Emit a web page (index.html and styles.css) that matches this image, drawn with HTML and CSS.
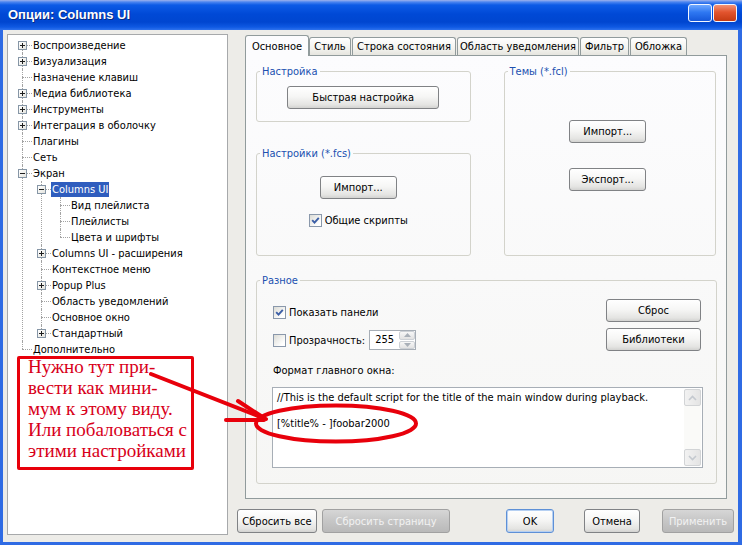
FILE: index.html
```html
<!DOCTYPE html>
<html lang="ru">
<head>
<meta charset="utf-8">
<title>Опции: Columns UI</title>
<link rel="stylesheet" href="styles.css">
</head>
<body>
<div class="window">
  <div class="titlebar">
    <span class="title">Опции: Columns UI</span>
    <div class="caption-buttons">
      <span class="cap-btn help"></span>
      <span class="cap-btn close"></span>
    </div>
  </div>
  <div class="client">
    <div class="tree">
      <ul class="tree-list">
        <li><span class="exp plus"></span><div class="row"><span class="label">Воспроизведение</span></div></li>
        <li><span class="exp plus"></span><div class="row"><span class="label">Визуализация</span></div></li>
        <li><div class="row"><span class="label">Назначение клавиш</span></div></li>
        <li><span class="exp plus"></span><div class="row"><span class="label">Медиа библиотека</span></div></li>
        <li><span class="exp plus"></span><div class="row"><span class="label">Инструменты</span></div></li>
        <li><span class="exp plus"></span><div class="row"><span class="label">Интеграция в оболочку</span></div></li>
        <li><div class="row"><span class="label">Плагины</span></div></li>
        <li><div class="row"><span class="label">Сеть</span></div></li>
        <li><span class="exp minus"></span><div class="row"><span class="label">Экран</span></div>
          <ul>
            <li><span class="exp minus"></span><div class="row"><span class="label selected">Columns UI</span></div>
              <ul>
                <li><div class="row"><span class="label">Вид плейлиста</span></div></li>
                <li><div class="row"><span class="label">Плейлисты</span></div></li>
                <li><div class="row"><span class="label">Цвета и шрифты</span></div></li>
              </ul>
            </li>
            <li><span class="exp plus"></span><div class="row"><span class="label">Columns UI - расширения</span></div></li>
            <li><div class="row"><span class="label">Контекстное меню</span></div></li>
            <li><span class="exp plus"></span><div class="row"><span class="label">Popup Plus</span></div></li>
            <li><div class="row"><span class="label">Область уведомлений</span></div></li>
            <li><div class="row"><span class="label">Основное окно</span></div></li>
            <li><span class="exp plus"></span><div class="row"><span class="label">Стандартный</span></div></li>
          </ul>
        </li>
        <li><div class="row"><span class="label">Дополнительно</span></div></li>
      </ul>
    </div>

    <div class="main">
      <div class="tabs">
        <span class="tab active t-main">Основное</span>
        <span class="tab t-style">Стиль</span>
        <span class="tab t-status">Строка состояния</span>
        <span class="tab t-tray">Область уведомления</span>
        <span class="tab t-filter">Фильтр</span>
        <span class="tab t-cover">Обложка</span>
      </div>
      <div class="page">
        <div class="top">
          <div class="col-left">
            <fieldset class="group g-setup">
              <legend>Настройка</legend>
              <div class="gbody">
                <button class="btn b-quick">Быстрая настройка</button>
              </div>
            </fieldset>
            <fieldset class="group g-fcs">
              <legend>Настройки (*.fcs)</legend>
              <div class="gbody">
                <button class="btn b-small">Импорт...</button>
                <div class="check-row shared">
                  <span class="cb"><svg viewBox="0 0 11 11" width="11" height="11"><path d="M2.2 5.2 L4.5 7.6 L8.8 2.8" fill="none" stroke="#3B5EA6" stroke-width="1.9"/></svg></span>
                  <span class="cb-label">Общие скрипты</span>
                </div>
              </div>
            </fieldset>
          </div>
          <fieldset class="group g-themes">
            <legend>Темы (*.fcl)</legend>
            <div class="gbody">
              <button class="btn b-small">Импорт...</button>
              <button class="btn b-small b-export">Экспорт...</button>
            </div>
          </fieldset>
        </div>

        <fieldset class="group g-misc">
          <legend>Разное</legend>
          <div class="misc-row">
            <div class="misc-left">
              <div class="check-row">
                <span class="cb"><svg viewBox="0 0 11 11" width="11" height="11"><path d="M2.2 5.2 L4.5 7.6 L8.8 2.8" fill="none" stroke="#3B5EA6" stroke-width="1.9"/></svg></span>
                <span class="cb-label">Показать панели</span>
              </div>
              <div class="check-row row-alpha">
                <span class="cb"></span>
                <span class="cb-label">Прозрачность:</span>
                <div class="spin">
                  <span class="spin-val">255</span>
                  <div class="spin-btns">
                    <span class="spin-btn"><svg viewBox="0 0 7 4" width="7" height="4"><path d="M0 4 L3.5 0 L7 4 Z" fill="#A9B0B8"/></svg></span>
                    <span class="spin-btn"><svg viewBox="0 0 7 4" width="7" height="4"><path d="M0 0 L3.5 4 L7 0 Z" fill="#A9B0B8"/></svg></span>
                  </div>
                </div>
              </div>
            </div>
            <div class="misc-right">
              <button class="btn b-wide">Сброс</button>
              <button class="btn b-wide b-libs">Библиотеки</button>
            </div>
          </div>
          <div class="fmt-label">Формат главного окна:</div>
          <div class="editor">
            <div class="editor-text">//This is the default script for the title of the main window during playback.

[%title% - ]foobar2000</div>
            <div class="vscroll">
              <span class="sb-btn"><svg viewBox="0 0 9 6" width="9" height="6"><path d="M1 5 L4.5 1.5 L8 5" fill="none" stroke="#C4C9CF" stroke-width="1.6"/></svg></span>
              <span class="sb-btn"><svg viewBox="0 0 9 6" width="9" height="6"><path d="M1 1 L4.5 4.5 L8 1" fill="none" stroke="#C4C9CF" stroke-width="1.6"/></svg></span>
            </div>
          </div>
        </fieldset>
      </div>

      <div class="actions">
        <button class="btn b-reset-all">Сбросить все</button>
        <button class="btn disabled b-reset-page">Сбросить страницу</button>
        <button class="btn b-ok">OK</button>
        <button class="btn b-cancel">Отмена</button>
        <button class="btn disabled b-apply">Применить</button>
      </div>
    </div>
  </div>
</div>

<div class="note">
  <div class="note-text">Нужно тут при-<br>вести как мини-<br>мум к этому виду.<br>Или побаловаться с<br>этими настройками</div>
</div>
<svg class="marks" width="742" height="545" viewBox="0 0 742 545">
  <g fill="none" stroke="#E8000B" stroke-width="4" stroke-linecap="round">
    <path d="M151 374 L266 419"/>
    <path d="M238 401 L264 418"/>
    <path d="M226 420 L264 420"/>
    <ellipse cx="336" cy="423.5" rx="80" ry="18"/>
  </g>
</svg>
</body>
</html>
```

FILE: styles.css
```css
* { box-sizing: border-box; }

html, body {
  margin: 0;
  padding: 0;
}

body {
  position: relative;
  width: 742px;
  height: 545px;
  overflow: hidden;
  background: #2F6BE4;
  font-family: "DejaVu Sans Condensed", "Liberation Sans", sans-serif;
  font-size: 11px;
  color: #000;
}

.window {
  display: flex;
  flex-direction: column;
  height: 545px;
}

/* ---------- title bar ---------- */
.titlebar {
  flex: none;
  height: 30px;
  display: flex;
  justify-content: space-between;
  align-items: flex-start;
  padding: 0 5px 0 8px;
  background: linear-gradient(#9FB3EC 0, #4C86F0 2px, #0D5BE6 5px, #0049D6 14px, #0046D0 22px, #0E58E2 27px, #2E72EE 30px);
}

.title {
  margin-top: 7px;
  color: #fff;
  font: bold 13px/16px "Liberation Sans", sans-serif;
  text-shadow: 1px 1px 0 #0A2A80;
}

.caption-buttons {
  display: flex;
  gap: 1px;
  margin-top: 4px;
}

.cap-btn {
  width: 24px;
  height: 18px;
  border: 1px solid #F2F6FF;
  border-radius: 3px;
}

.help { background: linear-gradient(#6FA8FF, #2F78F2 45%, #1557DA); }
.close { background: linear-gradient(#F39376, #E2542E 45%, #C53A12); }

/* ---------- client ---------- */
.client {
  flex: 1;
  margin: 0 4px 3px 3px;
  background: #EDECE8;
  display: flex;
  align-items: flex-start;
}

/* ---------- tree ---------- */
.tree {
  width: 221px;
  height: 501px;
  margin: 4px 0 0 4px;
  padding-top: 2px;
  background: #fff;
  border: 1px solid #A7A9AB;
}

.tree-list, .tree-list ul {
  list-style: none;
  margin: 0;
  padding: 0;
}

.tree-list ul { margin-left: -5px; }

.tree-list li {
  position: relative;
  padding-left: 24px;
}

.tree-list li::before {
  content: "";
  position: absolute;
  left: 14px;
  top: 0;
  bottom: 0;
  border-left: 1px dotted #A3A3A3;
}

.tree-list li:last-child::before { bottom: auto; height: 8px; }
.tree-list > li:first-child::before { top: 8px; }

.tree-list li::after {
  content: "";
  position: absolute;
  left: 14px;
  top: 8px;
  width: 10px;
  border-top: 1px dotted #A3A3A3;
}

.row {
  height: 16px;
  padding-top: 1px;
  line-height: 15px;
  white-space: nowrap;
}

.label {
  display: inline-block;
  padding: 0 1px;
  line-height: 15px;
}

.label.selected {
  background: #2F5DBE;
  color: #fff;
}

.exp {
  position: absolute;
  z-index: 1;
  left: 10px;
  top: 4px;
  width: 9px;
  height: 9px;
  border: 1px solid #8696A6;
  background: linear-gradient(135deg, #FFFFFF, #E4E4DE);
}

.exp.plus {
  background:
    linear-gradient(#1E1E1E, #1E1E1E) center / 5px 1px no-repeat,
    linear-gradient(#1E1E1E, #1E1E1E) center / 1px 5px no-repeat,
    linear-gradient(135deg, #FFFFFF, #E4E4DE);
}

.exp.minus {
  background:
    linear-gradient(#1E1E1E, #1E1E1E) center / 5px 1px no-repeat,
    linear-gradient(135deg, #FFFFFF, #E4E4DE);
}

/* ---------- main area ---------- */
.main {
  margin: 5px 0 0 9px;
  display: flex;
  flex-direction: column;
}

.tabs {
  position: relative;
  z-index: 2;
  display: flex;
  align-items: flex-end;
  gap: 1px;
  height: 21px;
  margin: 0 0 -1px 8px;
}

.tab {
  height: 18px;
  margin-bottom: 1px;
  padding-top: 2px;
  line-height: 14px;
  text-align: center;
  border: 1px solid #919B9C;
  border-bottom: none;
  border-radius: 3px 3px 0 0;
  background: linear-gradient(#FFFFFF, #F3F3EF 60%, #E6E5DF);
  white-space: nowrap;
}

.tab.active {
  height: 21px;
  margin-bottom: 0;
  margin-right: -1px;
  padding-top: 4px;
  background: #FCFCFE;
}

.t-main { width: 64px; }
.t-style { width: 42px; }
.t-status { width: 104px; }
.t-tray { width: 122px; }
.t-filter { width: 49px; }
.t-cover { width: 57px; }

.page {
  width: 482px;
  height: 444px;
  margin-left: 8px;
  padding: 9px 10px 0;
  border: 1px solid #919B9C;
  background: linear-gradient(#FCFCFE, #F6F6F4);
}

.top {
  display: flex;
  gap: 33px;
}

.col-left {
  width: 215px;
  display: flex;
  flex-direction: column;
}

/* group boxes */
.group {
  margin: 0;
  padding: 0;
  min-width: 0;
  border: 1px solid #D3D3CB;
  border-radius: 3px;
}

.group legend {
  margin-left: 3px;
  padding: 0 2px;
  line-height: 13px;
  color: #2050B0;
}

.gbody {
  display: flex;
  flex-direction: column;
  align-items: center;
}

.g-setup { height: 57px; }
.g-setup .gbody { padding-top: 8px; }

.g-fcs { height: 109px; margin-top: 25px; }
.g-fcs .gbody { padding: 16px 10px 0 0; }

.g-themes { width: 213px; height: 191px; }
.g-themes .gbody { padding: 42px 4px 0 0; }

.g-misc { width: 461px; height: 210px; margin-top: 18px; }

/* buttons */
.btn {
  font: inherit;
  color: #000;
  height: 23px;
  padding: 0;
  border: 1px solid #808285;
  border-radius: 3px;
  background: linear-gradient(#FFFFFF, #F6F6F5 45%, #E4E4E2 85%, #D2D2D0);
  white-space: nowrap;
}

.btn.disabled {
  color: #F2F2F2;
  border-color: #A1A1A1;
  background: linear-gradient(#D6D6D6, #C6C6C6 50%, #B9B9B9);
}

.b-quick { width: 152px; }
.b-small { width: 77px; }
.b-export { margin-top: 25px; }
.b-wide { width: 95px; }
.b-libs { margin-top: 6px; }

/* checkboxes */
.check-row {
  display: flex;
  align-items: center;
  height: 16px;
  white-space: nowrap;
}

.shared { margin-top: 13px; }

.cb {
  flex: none;
  width: 13px;
  height: 13px;
  margin-right: 3px;
  border: 1px solid #8A98AB;
  background: linear-gradient(135deg, #DCDCD6, #FFFFFF 80%);
  display: flex;
  align-items: center;
  justify-content: center;
}

/* misc group */
.misc-row {
  display: flex;
  justify-content: space-between;
  align-items: flex-start;
  padding: 0 15px 0 16px;
}

.misc-left { margin-top: 17px; }
.row-alpha { height: 20px; margin-top: 10px; }

.spin {
  display: flex;
  width: 47px;
  height: 20px;
  margin-left: 4px;
  border: 1px solid #A7AEB6;
  background: #fff;
}

.spin-val {
  flex: 1;
  padding-left: 5px;
  line-height: 18px;
}

.spin-btns {
  width: 16px;
  display: flex;
  flex-direction: column;
  gap: 1px;
}

.spin-btn {
  flex: 1;
  display: flex;
  align-items: center;
  justify-content: center;
  border: 1px solid #CDD1D6;
  border-radius: 2px;
  background: linear-gradient(#F7F7F7, #E2E2E2);
}

.misc-right {
  display: flex;
  flex-direction: column;
  margin-top: 12px;
}

.fmt-label {
  margin: 13px 0 0 16px;
  line-height: 13px;
}

.editor {
  display: flex;
  width: 431px;
  height: 81px;
  margin: 10px 0 0 15px;
  border: 1px solid #A7AEB6;
  background: #fff;
}

.editor-text {
  flex: 1;
  padding: 3px 0 0 4px;
  line-height: 13px;
  white-space: pre;
  overflow: hidden;
}

.vscroll {
  width: 17px;
  margin: 1px 1px 1px 0;
  display: flex;
  flex-direction: column;
  justify-content: space-between;
  background: #FAFAF8;
}

.sb-btn {
  height: 17px;
  display: flex;
  align-items: center;
  justify-content: center;
  border: 1px solid #D2D4D6;
  border-radius: 2px;
  background: linear-gradient(90deg, #F2F2F2, #E4E4E4);
}

/* bottom buttons */
.actions {
  display: flex;
  margin-top: 10px;
}

.actions .btn { height: 24px; }
.b-reset-all { width: 80px; }
.b-reset-page { width: 128px; margin-left: 5px; }
.b-ok {
  width: 48px;
  margin-left: 56px;
  border-color: #5E90D6;
  box-shadow: inset 0 0 0 1px #B6D0F2;
}
.b-cancel { width: 56px; margin-left: 30px; }
.b-apply { width: 72px; margin-left: 22px; }

/* ---------- annotation overlay ---------- */
.note {
  position: absolute;
  left: 17px;
  top: 356px;
  width: 177px;
  height: 114px;
  padding-left: 8px;
  border: 3px solid #E8000B;
  border-radius: 2px;
  color: #D8001A;
  font-family: "Liberation Serif", serif;
  font-size: 19px;
  line-height: 21px;
  white-space: nowrap;
}

.note-text { margin-top: -3px; }

.marks {
  position: absolute;
  left: 0;
  top: 0;
  pointer-events: none;
}
```
